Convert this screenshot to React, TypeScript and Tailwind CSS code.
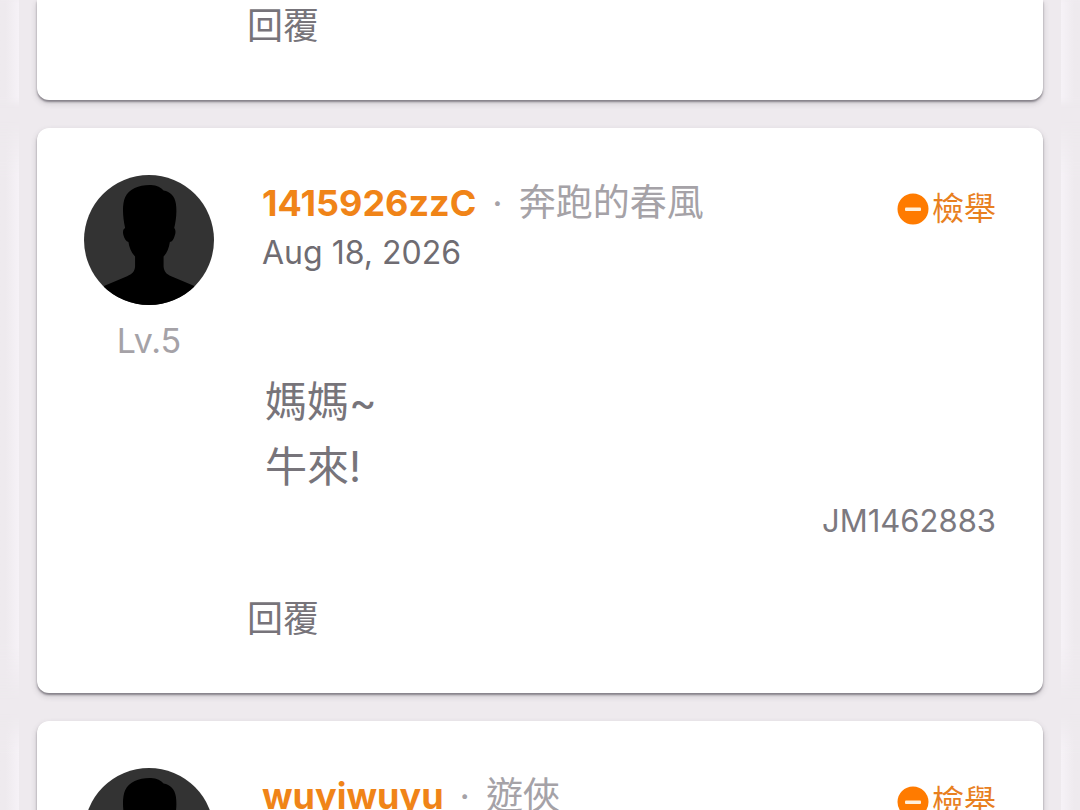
import type { ReactNode } from "react";

interface Comment {
  id: string;
  author: string;
  title: string;
  date: string;
  level: number;
  lines: string[];
  code: string;
}

const comments: Comment[] = [
  {
    id: "c1",
    author: "1415926zzC",
    title: "奔跑的春風",
    date: "Aug 18, 2026",
    level: 5,
    lines: ["媽媽~", "牛來!"],
    code: "JM1462883",
  },
  {
    id: "c2",
    author: "wuyiwuyu",
    title: "遊俠",
    date: "Aug 18, 2026",
    level: 5,
    lines: [],
    code: "",
  },
];

function Avatar() {
  return (
    <svg
      viewBox="70 42 392 392"
      className="size-[130px] rounded-full bg-[#333333]"
      role="img"
      aria-label="avatar"
    >
      <path d="M194 202 C187 170 184 132 194 109 C207 82 237 71 272 72 C290 73 303 79 310 89 C330 92 344 107 347 128 C351 154 347 180 342 202 C347 208 347 217 343 227 C340 237 336 244 329 244 C326 263 320 277 310 288 L310 318 C311 333 319 342 333 347 L401 376 L440 434 L90 434 L132 376 L200 347 C215 341 223 333 224 318 L224 288 C213 276 206 260 204 244 C197 243 192 235 189 224 C186 213 188 205 194 202 Z" />
    </svg>
  );
}

function ReplyButton() {
  return (
    <button type="button" className="text-4xl leading-[52px] text-[#77747a]">
      回覆
    </button>
  );
}

function ReportButton() {
  return (
    <button
      type="button"
      className="flex shrink-0 items-center gap-[3px] text-[32px] leading-12 text-[#e8801f]"
    >
      <svg viewBox="0 0 32 32" className="size-8" aria-hidden="true">
        <circle cx="16" cy="16" r="15.5" fill="#ff7b00" />
        <rect x="8" y="14.5" width="16" height="3.4" rx="1" fill="#fff0dc" />
      </svg>
      檢舉
    </button>
  );
}

function Row({ children, first }: { children: ReactNode; first?: boolean }) {
  return (
    <div className="flex gap-[18px]">
      <div className="-my-2 w-[19px] shrink-0 bg-linear-to-r from-[#eeeaee] from-30% to-[#f6f2f7] mask-y-from-90% mask-y-to-100%" />
      <article
        className={
          first
            ? "min-w-0 flex-1 rounded-b-xl bg-white shadow-[0_2px_2px_rgba(60,55,65,0.5),0_3px_6px_rgba(60,55,65,0.2)]"
            : "min-w-0 flex-1 rounded-xl bg-white shadow-[0_2px_2px_rgba(60,55,65,0.5),0_3px_6px_rgba(60,55,65,0.2)]"
        }
      >
        {children}
      </article>
      <div className="-my-2 w-[19px] shrink-0 bg-linear-to-l from-[#eeeaee] from-30% to-[#f6f2f7] mask-y-from-90% mask-y-to-100%" />
    </div>
  );
}

function CommentCard({ comment }: { comment: Comment }) {
  return (
    <Row>
      <div className="flex gap-12 px-[47px] pt-[47px]">
        <div className="flex w-[130px] shrink-0 flex-col items-center">
          <Avatar />
          <span className="mt-3 text-[34px] leading-12 text-[#a5a2a7]">
            Lv.{comment.level}
          </span>
        </div>
        <div className="min-w-0 flex-1">
          <div className="flex items-start justify-between gap-4">
            <h2 className="flex items-center gap-4 text-4xl leading-14">
              <a href={"#" + comment.id} className="font-bold text-[#f08418]">
                {comment.author}
              </a>
              <span className="text-[#a5a2a7]">·</span>
              <span className="text-[37px] text-[#a5a2a7]">{comment.title}</span>
            </h2>
            <div className="pt-2.5">
              <ReportButton />
            </div>
          </div>
          <time className="block text-[32px] leading-10 text-[#6f6c72]">
            {comment.date}
          </time>
        </div>
      </div>
      <div className="pt-1 pr-[47px] pb-12 pl-[210px]">
        <div className="pl-[18px] text-[42px] leading-[65px] text-[#77747a]">
          {comment.lines.map((line) => (
            <p key={line}>{line}</p>
          ))}
        </div>
        <p className="pt-0.5 text-right text-[31px] leading-10 text-[#7c797f]">
          {comment.code}
        </p>
        <div className="mt-[52px]">
          <ReplyButton />
        </div>
      </div>
    </Row>
  );
}

export default function App() {
  return (
    <main className="flex h-screen flex-col gap-7 overflow-hidden bg-[#eeeaee] font-[Inter,'Noto_Sans_CJK_TC',sans-serif]">
      <Row first>
        <div className="pb-12 pl-[210px]">
          <ReplyButton />
        </div>
      </Row>
      {comments.map((comment) => (
        <CommentCard key={comment.id} comment={comment} />
      ))}
    </main>
  );
}
